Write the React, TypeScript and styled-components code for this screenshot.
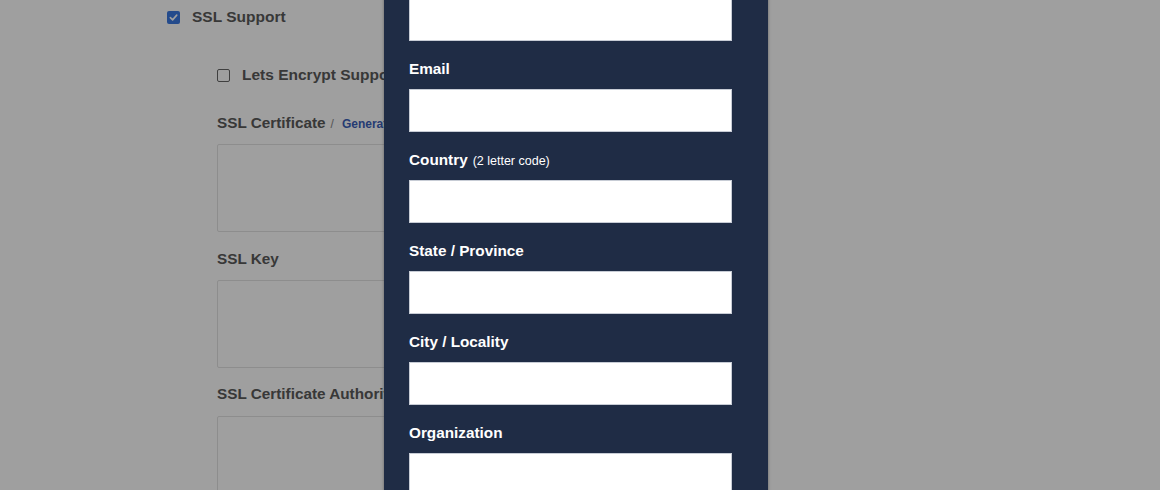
import React from "react";
import styled, { createGlobalStyle } from "styled-components";

const Global = createGlobalStyle`
  html, body { margin: 0; padding: 0; }
  body {
    width: 1160px;
    height: 490px;
    overflow: hidden;
    background: #ffffff;
    font-family: "Liberation Sans", Arial, sans-serif;
  }
`;

const Page = styled.div`
  position: relative;
  width: 1160px;
  height: 490px;
  overflow: hidden;
`;

const Settings = styled.div`
  display: flex;
  flex-direction: column;
  padding-left: 167px;
  color: #5a5a5a;
`;

const CheckRow = styled.label<{ $top: number }>`
  display: flex;
  align-items: center;
  gap: 12px;
  margin-top: ${(p) => p.$top}px;
  height: 20px;
  font-size: 15.5px;
  font-weight: bold;
  white-space: nowrap;
`;

const Box = styled.span<{ $checked?: boolean }>`
  display: inline-flex;
  align-items: center;
  justify-content: center;
  width: 13px;
  height: 13px;
  box-sizing: border-box;
  border-radius: 2px;
  background: ${(p) => (p.$checked ? "#3a78e0" : "#ffffff")};
  border: ${(p) => (p.$checked ? "none" : "1.5px solid #666")};
  flex: none;
`;

const Nested = styled.div`
  display: flex;
  flex-direction: column;
  margin-left: 50px;
`;

const FieldLabel = styled.div<{ $top: number }>`
  margin-top: ${(p) => p.$top}px;
  height: 20px;
  line-height: 20px;
  font-size: 15.3px;
  font-weight: bold;
  white-space: nowrap;
`;

const Slash = styled.span`
  font-weight: normal;
  font-size: 12px;
  color: #888;
  margin: 0 8px 0 5px;
`;

const Link = styled.span`
  font-size: 12px;
  font-weight: bold;
  color: #3c5fb8;
`;

const TextArea = styled.div<{ $top: number }>`
  margin-top: ${(p) => p.$top}px;
  width: 520px;
  height: 88px;
  box-sizing: border-box;
  border: 1px solid #e2e2e2;
  border-radius: 2px;
  background: #ffffff;
`;

const Overlay = styled.div`
  position: absolute;
  inset: 0;
  background: rgba(0, 0, 0, 0.375);
`;

const Modal = styled.div`
  position: absolute;
  left: 384px;
  top: -22px;
  width: 384px;
  height: 600px;
  box-sizing: border-box;
  padding: 20px 36px 0 25px;
  background: #1f2c45;
  box-shadow: 0 0 3px rgba(0, 0, 0, 0.35);
  display: flex;
  flex-direction: column;
`;

const Field = styled.div`
  display: flex;
  flex-direction: column;
  margin-bottom: 18px;
`;

const MLabel = styled.div`
  height: 20px;
  line-height: 20px;
  color: #ffffff;
  font-size: 15.3px;
  font-weight: bold;
  margin-bottom: 10px;
  white-space: nowrap;
`;

const Hint = styled.span`
  font-size: 12.5px;
  font-weight: normal;
  margin-left: 5px;
`;

const Input = styled.div`
  height: 43px;
  box-sizing: border-box;
  background: #ffffff;
  border: 1px solid #c7ccd5;
`;

const Check = () => (
  <svg width="9" height="9" viewBox="0 0 10 10">
    <path d="M1.5 5.2 L4 7.6 L8.6 2.4" fill="none" stroke="#fff" strokeWidth="1.8" strokeLinecap="round" strokeLinejoin="round" />
  </svg>
);

const fields: { label?: string; hint?: string }[] = [
  {},
  { label: "Email" },
  { label: "Country", hint: "(2 letter code)" },
  { label: "State / Province" },
  { label: "City / Locality" },
  { label: "Organization" },
];

export default function App() {
  return (
    <Page>
      <Global />
      <Settings>
        <CheckRow $top={7}>
          <Box $checked>
            <Check />
          </Box>
          SSL Support
        </CheckRow>
        <Nested>
          <CheckRow $top={38}>
            <Box />
            Lets Encrypt Support
          </CheckRow>
          <FieldLabel $top={28}>
            SSL Certificate<Slash>/</Slash>
            <Link>Generate</Link>
          </FieldLabel>
          <TextArea $top={11} />
          <FieldLabel $top={17}>SSL Key</FieldLabel>
          <TextArea $top={11} />
          <FieldLabel $top={16}>SSL Certificate Authority</FieldLabel>
          <TextArea $top={12} />
        </Nested>
      </Settings>
      <Overlay />
      <Modal>
        {fields.map((f, i) => (
          <Field key={i}>
            {f.label && (
              <MLabel>
                {f.label}
                {f.hint && <Hint>{f.hint}</Hint>}
              </MLabel>
            )}
            <Input />
          </Field>
        ))}
      </Modal>
    </Page>
  );
}
